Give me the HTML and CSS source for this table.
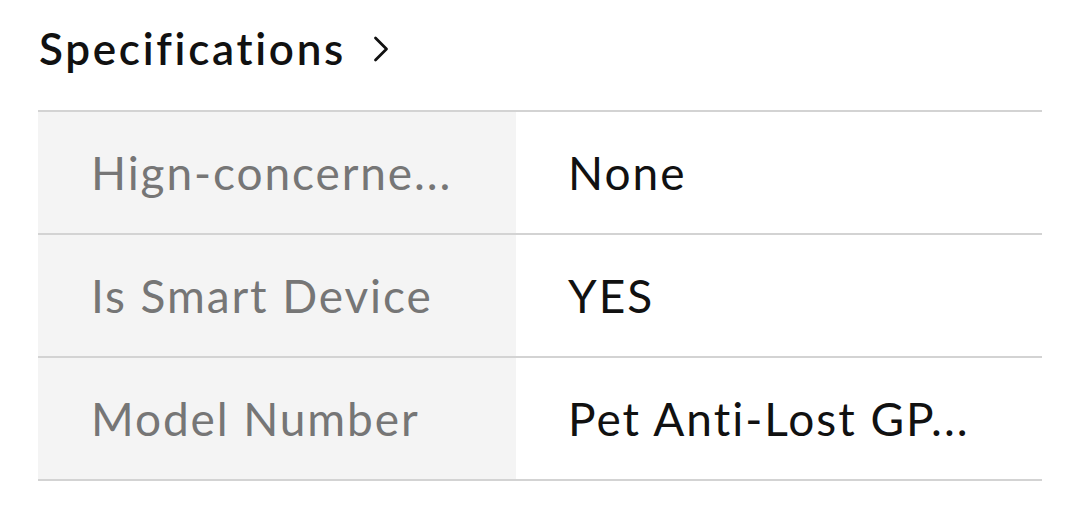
FILE: index.html
```html
<!DOCTYPE html>
<html>
<head>
<meta charset="utf-8">
<link rel="stylesheet" href="styles.css">
</head>
<body>
<div class="page">
  <div class="title">
    <span class="title-text">Specifications</span>
    <svg class="chev" width="18" height="26" viewBox="0 0 18 26"><path d="M3.5 2 L14.5 13 L3.5 24" fill="none" stroke="#111" stroke-width="2.8" stroke-linecap="round" stroke-linejoin="round"/></svg>
  </div>
  <div class="specs">
    <div class="row"><div class="label">Hign-concerne...</div><div class="value">None</div></div>
    <div class="row"><div class="label">Is Smart Device</div><div class="value">YES</div></div>
    <div class="row"><div class="label">Model Number</div><div class="value">Pet Anti-Lost GP...</div></div>
  </div>
</div>
</body>
</html>
```
FILE: styles.css
```css
* { box-sizing: border-box; }
html, body { margin: 0; padding: 0; background: #fff; }
body { font-family: "Lato", "Noto Sans", sans-serif; }
.page { padding: 0 38px; width: 1080px; }
.title { height: 110px; display: flex; align-items: center; padding-left: 1px; padding-bottom: 14px; }
.title-text { font-size: 44px; font-weight: 600; color: #111; letter-spacing: 2.7px; }
.chev { margin-left: 26px; margin-top: 2px; }
.specs { border-top: 2px solid #d3d3d3; }
.row { display: flex; height: 123px; border-bottom: 2px solid #d3d3d3; }
.label { width: 478px; background: #f4f4f4; color: #767676; font-size: 46px; letter-spacing: 1.9px; display: flex; align-items: center; padding-left: 53px; }
.value { flex: 1; color: #111; font-size: 46px; letter-spacing: 2px; display: flex; align-items: center; padding-left: 52px; }
```
